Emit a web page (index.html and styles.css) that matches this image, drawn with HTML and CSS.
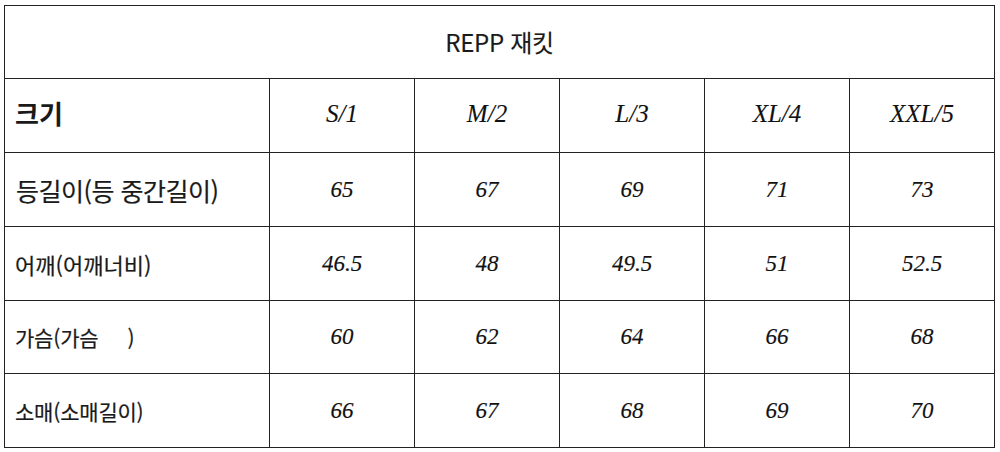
FILE: index.html
```html
<!DOCTYPE html>
<html lang="ko">
<head>
<meta charset="utf-8">
<title>REPP 재킷</title>
<link rel="stylesheet" href="styles.css">
</head>
<body>
<div class="wrap">
<table class="size-table">
  <colgroup>
    <col class="c-label">
    <col class="c-size"><col class="c-size"><col class="c-size"><col class="c-size"><col class="c-size">
  </colgroup>
  <tr class="r-title"><td colspan="6" class="title">REPP 재킷</td></tr>
  <tr class="r-head">
    <td class="label head-label">크기</td>
    <td class="val size">S/1</td><td class="val size">M/2</td><td class="val size">L/3</td><td class="val size">XL/4</td><td class="val size">XXL/5</td>
  </tr>
  <tr class="r-row">
    <td class="label big">등길이(등 중간길이)</td>
    <td class="val">65</td><td class="val">67</td><td class="val">69</td><td class="val">71</td><td class="val">73</td>
  </tr>
  <tr class="r-row">
    <td class="label mid">어깨(어깨너비)</td>
    <td class="val">46.5</td><td class="val">48</td><td class="val">49.5</td><td class="val">51</td><td class="val">52.5</td>
  </tr>
  <tr class="r-short">
    <td class="label">가슴(가슴<span class="gap"></span>)</td>
    <td class="val">60</td><td class="val">62</td><td class="val">64</td><td class="val">66</td><td class="val">68</td>
  </tr>
  <tr class="r-row">
    <td class="label">소매(소매길이)</td>
    <td class="val">66</td><td class="val">67</td><td class="val">68</td><td class="val">69</td><td class="val">70</td>
  </tr>
</table>
</div>
</body>
</html>
```

FILE: styles.css
```css
html, body {
  margin: 0;
  padding: 0;
  background: #ffffff;
}
.wrap {
  padding: 5px 0 0 4px;
}
.size-table {
  border-collapse: collapse;
  table-layout: fixed;
  width: 991px;
  color: #1a1a1a;
}
.c-label { width: 265px; }
.c-size { width: 145px; }
.size-table td {
  border: 1px solid #222;
  padding: 0;
  line-height: 30px;
  vertical-align: middle;
}
.r-title td { height: 72px; }
.r-head td { height: 73px; }
.r-row td { height: 73px; }
.r-short td { height: 72px; }
.title {
  text-align: center;
  font-family: "Noto Sans CJK KR", "Noto Sans", sans-serif;
  font-size: 24px;
  letter-spacing: -0.3px;
  -webkit-text-stroke: 0.15px #1a1a1a;
}
.label {
  font-family: "Noto Sans CJK KR", "Noto Sans", sans-serif;
  font-size: 21px;
  letter-spacing: -0.2px;
  padding-left: 10px !important;
  text-align: left;
  white-space: nowrap;
  -webkit-text-stroke: 0.2px #1a1a1a;
}
.label.big {
  font-size: 25px;
  letter-spacing: -0.5px;
  padding-left: 11px !important;
}
.label.mid {
  font-size: 22px;
  letter-spacing: 0;
  padding-left: 10px !important;
}
.gap {
  display: inline-block;
  width: 29px;
}
.head-label {
  font-size: 26px;
  font-weight: 700;
  letter-spacing: 0;
  padding-left: 10px !important;
  padding-bottom: 6px !important;
  -webkit-text-stroke: 0;
}
.r-head .head-label { height: 67px; }
.val {
  text-align: center;
  font-family: "Liberation Serif", "Times New Roman", serif;
  font-style: italic;
  font-size: 23px;
  color: #111;
  -webkit-text-stroke: 0.15px #111;
}
.val.size {
  font-size: 25px;
  -webkit-text-stroke: 0.1px #111;
  padding-bottom: 4px !important;
}
.r-head .val.size { height: 69px; }
```
